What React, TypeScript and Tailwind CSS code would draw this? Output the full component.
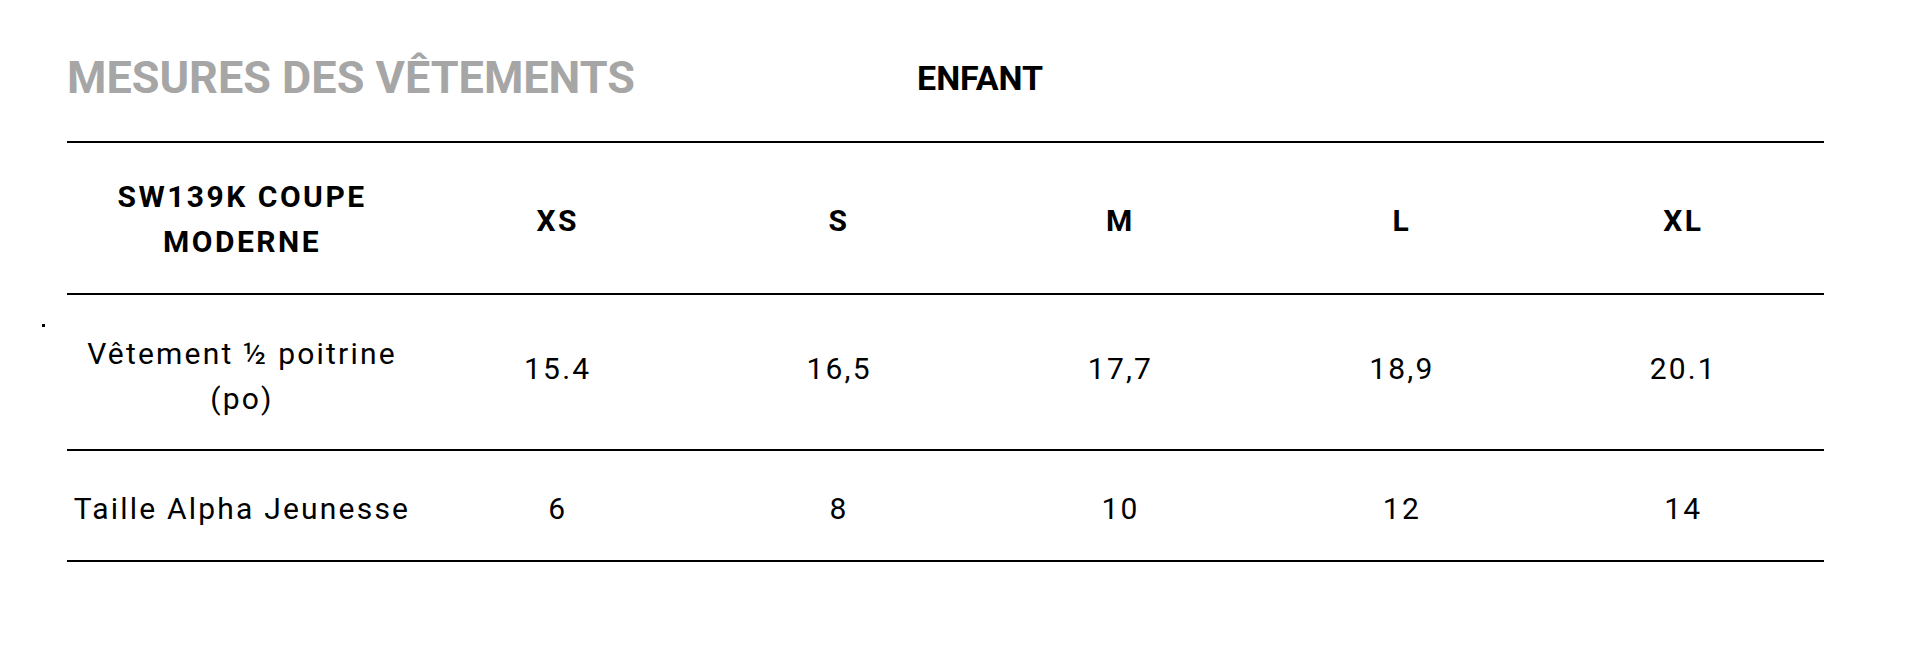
const SIZES = ["XS", "S", "M", "L", "XL"];

const ROWS = [
  {
    label: ["Vêtement ½ poitrine", "(po)"],
    values: ["15.4", "16,5", "17,7", "18,9", "20.1"],
    height: "h-[156px]",
    labelPad: "pt-[7px]",
    valuePad: "pb-[7px]",
  },
  {
    label: ["Taille Alpha Jeunesse"],
    values: ["6", "8", "10", "12", "14"],
    height: "h-[111px]",
    labelPad: "pt-[5px]",
    valuePad: "pt-[5px]",
  },
];

function Cell({
  children,
  bold,
  className = "",
}: {
  children: React.ReactNode;
  bold?: boolean;
  className?: string;
}) {
  return (
    <div
      className={
        "flex flex-col items-center justify-center text-center text-[30px] leading-[45px] text-black " +
        (bold ? "font-bold tracking-[2.5px] " : "font-normal tracking-[2.2px] ") +
        className
      }
    >
      {children}
    </div>
  );
}

export default function App() {
  return (
    <div className="relative min-h-[647px] w-full bg-white font-['Roboto','Liberation_Sans',sans-serif]">
      {/* stray mark from the source page */}
      <span className="absolute left-[42px] top-[324px] size-[3px] bg-black" />

      <div className="px-[67px] pt-[55px]">
        <div className="flex items-center">
          <h1 className="w-[850px] text-[45px] font-bold leading-none text-[#a6a6a6]">
            MESURES DES VÊTEMENTS
          </h1>
          <h2 className="text-[34px] font-bold leading-none text-black">ENFANT</h2>
        </div>

        <div className="mt-[41px] w-[1757px] border-t-2 border-black">
          <div className="grid h-[152px] grid-cols-[350px_repeat(5,1fr)] border-b-2 border-black">
            <Cell bold className="pt-[2px]">
              <span>SW139K COUPE</span>
              <span>MODERNE</span>
            </Cell>
            {SIZES.map((s) => (
              <Cell bold key={s} className="pt-[4px]">
                {s}
              </Cell>
            ))}
          </div>

          {ROWS.map((row) => (
            <div
              key={row.label[0]}
              className={
                "grid grid-cols-[350px_repeat(5,1fr)] border-b-2 border-black " + row.height
              }
            >
              <Cell className={row.labelPad}>
                {row.label.map((l) => (
                  <span key={l}>{l}</span>
                ))}
              </Cell>
              {row.values.map((v, i) => (
                <Cell key={i} className={row.valuePad}>
                  {v}
                </Cell>
              ))}
            </div>
          ))}
        </div>
      </div>
    </div>
  );
}
